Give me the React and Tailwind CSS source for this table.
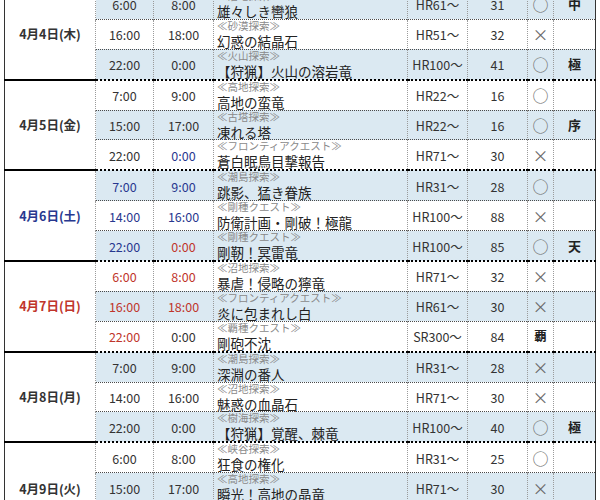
const BLUE = 'text-[#28388f]';
const RED = 'text-[#c0352b]';

// one entry per day; rows alternate blue / white across the whole table
const days = [
  {
    date: '4月4日(木)',
    rows: [
      { s: '6:00', e: '8:00', cat: '≪沼地探索≫', name: '雄々しき轡狼', hr: 'HR61〜', lv: '31', mark: '○', rank: '中' },
      { s: '16:00', e: '18:00', cat: '≪砂漠探索≫', name: '幻惑の結晶石', hr: 'HR51〜', lv: '32', mark: '×' },
      { s: '22:00', e: '0:00', cat: '≪火山探索≫', name: '【狩猟】火山の溶岩竜', hr: 'HR100〜', lv: '41', mark: '○', rank: '極' },
    ],
  },
  {
    date: '4月5日(金)',
    rows: [
      { s: '7:00', e: '9:00', cat: '≪高地探索≫', name: '高地の蛮竜', hr: 'HR22〜', lv: '16', mark: '○' },
      { s: '15:00', e: '17:00', cat: '≪古塔探索≫', name: '凍れる塔', hr: 'HR22〜', lv: '16', mark: '○', rank: '序' },
      { s: '22:00', e: '0:00', eColor: BLUE, cat: '≪フロンティアクエスト≫', name: '蒼白眠鳥目撃報告', hr: 'HR71〜', lv: '30', mark: '×' },
    ],
  },
  {
    date: '4月6日(土)',
    color: BLUE,
    rows: [
      { s: '7:00', e: '9:00', sColor: BLUE, eColor: BLUE, cat: '≪潮島探索≫', name: '跳影、猛き眷族', hr: 'HR31〜', lv: '28', mark: '○' },
      { s: '14:00', e: '16:00', sColor: BLUE, eColor: BLUE, cat: '≪剛種クエスト≫', name: '防衛計画・剛破！極龍', hr: 'HR100〜', lv: '88', mark: '×' },
      { s: '22:00', e: '0:00', sColor: BLUE, eColor: RED, cat: '≪剛種クエスト≫', name: '剛靭！冥雷竜', hr: 'HR100〜', lv: '85', mark: '○', rank: '天' },
    ],
  },
  {
    date: '4月7日(日)',
    color: RED,
    rows: [
      { s: '6:00', e: '8:00', sColor: RED, eColor: RED, cat: '≪沼地探索≫', name: '暴虐！侵略の獰竜', hr: 'HR71〜', lv: '32', mark: '×' },
      { s: '16:00', e: '18:00', sColor: RED, eColor: RED, cat: '≪フロンティアクエスト≫', name: '炎に包まれし白', hr: 'HR61〜', lv: '30', mark: '×' },
      { s: '22:00', e: '0:00', sColor: RED, cat: '≪覇種クエスト≫', name: '剛砲不沈', hr: 'SR300〜', lv: '84', mark: '覇' },
    ],
  },
  {
    date: '4月8日(月)',
    rows: [
      { s: '7:00', e: '9:00', cat: '≪潮島探索≫', name: '深淵の番人', hr: 'HR31〜', lv: '28', mark: '×' },
      { s: '14:00', e: '16:00', cat: '≪沼地探索≫', name: '魅惑の血晶石', hr: 'HR71〜', lv: '30', mark: '×' },
      { s: '22:00', e: '0:00', cat: '≪樹海探索≫', name: '【狩猟】覚醒、棘竜', hr: 'HR100〜', lv: '40', mark: '○', rank: '極' },
    ],
  },
  {
    date: '4月9日(火)',
    rows: [
      { s: '6:00', e: '8:00', cat: '≪峡谷探索≫', name: '狂食の権化', hr: 'HR31〜', lv: '25', mark: '○' },
      { s: '15:00', e: '17:00', cat: '≪高地探索≫', name: '瞬光！高地の晶竜', hr: 'HR71〜', lv: '30', mark: '×' },
      { s: '22:00', e: '0:00', cat: '', name: '', hr: '', lv: '', mark: '' },
    ],
  },
];

const dot = 'border-l border-dotted border-l-[#9a9a9a]';

function QuestRow({ row, first, blue, day }) {
  const bg = blue ? 'bg-[#dbe9f2]' : 'bg-white';
  const top = first ? 'border-t-2 border-t-black' : 'border-t border-t-[#4a4a4a]';
  const cell = `${top} ${bg} p-0 text-center align-middle leading-[16px]`;
  return (
    <tr>
      {first && (
        <td
          rowSpan={3}
          className={`border-t-2 border-t-black bg-white p-0 text-center align-middle text-[12.5px] font-bold leading-[16px] ${day.color || 'text-[#333]'}`}
        >
          {day.date}
        </td>
      )}
      <td className={`${cell} ${dot} pt-[2px] text-[12.5px] ${row.sColor || 'text-[#333]'}`}>{row.s}</td>
      <td className={`${cell} ${dot} pt-[2px] text-[12.5px] ${row.eColor || 'text-[#333]'}`}>{row.e}</td>
      <td className={`${top} ${bg} ${dot} p-0 pl-[3px] text-left align-top`}>
        <div className="h-[28.9px] overflow-visible">
          <div className="whitespace-nowrap text-[10.5px] leading-[12px] text-[#8a8a8a]">{row.cat}</div>
          <div className="mt-[2px] whitespace-nowrap text-[13.5px] leading-[15px] text-[#222]">{row.name}</div>
        </div>
      </td>
      <td className={`${cell} ${dot} pt-[2px] text-[12.5px] text-[#333]`}>{row.hr}</td>
      <td className={`${cell} ${dot} pt-[2px] text-[12.5px] text-[#333]`}>{row.lv}</td>
      <td
        className={`${cell} ${dot} ${row.mark === '覇' ? 'text-[12.5px] font-bold text-[#222]' : 'text-[16px] text-[#6a6a6a]'}`}
      >
        {row.mark}
      </td>
      <td className={`${cell} ${dot} text-[13px] font-bold text-[#222]`}>{row.rank}</td>
    </tr>
  );
}

export default function App() {
  let n = 0;
  return (
    <div
      className="h-[500px] w-[600px] overflow-hidden bg-white"
      style={{ fontFamily: '"Noto Sans CJK JP", "Noto Sans", sans-serif' }}
    >
      <table className="ml-[4px] -mt-[12px] w-[591px] table-fixed border-collapse border-x border-x-[#333]">
        <colgroup>
          <col className="w-[91px]" />
          <col className="w-[58px]" />
          <col className="w-[60px]" />
          <col className="w-[194px]" />
          <col className="w-[60px]" />
          <col className="w-[60px]" />
          <col className="w-[26px]" />
          <col className="w-[42px]" />
        </colgroup>
        <tbody>
          {days.map((day) =>
            day.rows.map((row, i) => {
              const blue = n % 2 === 0;
              n += 1;
              return <QuestRow key={day.date + i} row={row} first={i === 0} blue={blue} day={day} />;
            })
          )}
        </tbody>
      </table>
    </div>
  );
}
